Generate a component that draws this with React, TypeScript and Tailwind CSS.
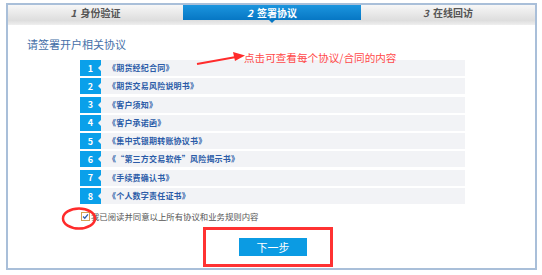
import React from "react";

const items = [
  "《期货经纪合同》",
  "《期货交易风险说明书》",
  "《客户须知》",
  "《客户承诺函》",
  "《集中式银期转账协议书》",
  "《“第三方交易软件”风险揭示书》",
  "《手续费确认书》",
  "《个人数字责任证书》",
];

const font = { fontFamily: '"Noto Sans CJK SC", "Noto Sans", sans-serif' };

export default function App() {
  return (
    <div className="relative w-[542px] h-[275px] bg-white overflow-hidden" style={font}>
      <div className="pt-[3px] pl-[6px]">
        <div className="w-[531px] h-[267px] border-2 border-[#a9bfd9] flex flex-col">
          {/* tabs */}
          <div className="flex h-[15px]">
            <div className="w-[175px] flex items-center justify-center bg-gradient-to-b from-[#f7f7f7] to-[#dedede] text-[10px] font-bold text-[#555] leading-none">
              <span className="italic mr-[4px]">1</span>身份验证
            </div>
            <div className="relative w-[178px] flex items-center justify-center bg-gradient-to-b from-[#1b95de] to-[#0677c4] text-[10px] font-bold text-white leading-none">
              <span className="italic mr-[4px]">2</span>签署协议
              <div className="absolute left-[86px] top-[15px] w-0 h-0 border-x-[3px] border-x-transparent border-t-[3px] border-t-[#0677c4]" />
            </div>
            <div className="w-[174px] flex items-center justify-center bg-gradient-to-b from-[#f7f7f7] to-[#dedede] text-[10px] font-bold text-[#555] leading-none">
              <span className="italic mr-[4px]">3</span>在线回访
            </div>
          </div>
          <div className="h-[5px] bg-gradient-to-b from-[#dcdcdc] to-[#efefef]" />

          {/* content */}
          <div className="pt-[12px] pl-[19px] text-[11px] leading-[14px] text-[#4670a8]">
            请签署开户相关协议
          </div>

          <div className="mt-[9px] ml-[72px] w-[385px] flex flex-col gap-[2.3px]">
            {items.map((t, i) => (
              <div key={i} className="h-[16px] flex items-center bg-[#f2f3f6]">
                <div className="relative w-[21px] h-full bg-[#0aa0ea] flex items-center justify-center text-white text-[9px] font-bold leading-none">
                  {i + 1}
                  <div className="absolute right-0 top-[5px] w-0 h-0 border-y-[3px] border-y-transparent border-r-[3px] border-r-[#f2f3f6]" />
                </div>
                <div className="ml-[7px] text-[8px] tracking-[0.2px] font-bold text-[#2b5ca8] leading-none">
                  {t}
                </div>
              </div>
            ))}
          </div>

          <div className="mt-[6px] ml-[73px] flex items-center h-[12px]">
            <div className="relative w-[9px] h-[9px] border border-[#d4a252] bg-white">
              <svg viewBox="0 0 10 10" className="absolute left-0 top-0 w-[7px] h-[7px]">
                <path d="M1.5 5 L4 7.5 L8.5 2" fill="none" stroke="#2d5fb0" strokeWidth="1.8" />
              </svg>
            </div>
            <span className="ml-[1px] text-[8.4px] text-[#555] leading-none">我已阅读并同意以上所有协议和业务规则内容</span>
          </div>

          <div className="mt-[16px] ml-[231px] w-[68px] h-[18px] bg-[#0b9be3] text-white text-[11px] flex items-center justify-center leading-none">
            下一步
          </div>
        </div>
      </div>

      {/* red annotations */}
      <svg className="absolute left-0 top-0 pointer-events-none" width="542" height="275">
        <line x1="197" y1="64" x2="236" y2="57" stroke="#ff2b2b" strokeWidth="2" />
        <polygon points="245,55.5 233,52 235,61" fill="#ff2b2b" />
        <ellipse cx="79" cy="218.5" rx="16" ry="10" fill="none" stroke="#ff2b2b" strokeWidth="2.5" />
        <rect x="204.5" y="228.5" width="127" height="37" fill="none" stroke="#ff3232" strokeWidth="3" />
      </svg>
      <div className="absolute left-[244px] top-[51px] text-[10.6px] leading-[14px] text-[#ff4a4a]">
        点击可查看每个协议/合同的内容
      </div>
    </div>
  );
}
